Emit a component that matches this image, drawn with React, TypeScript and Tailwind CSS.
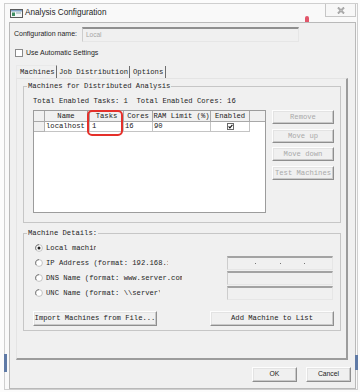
import React from "react";

const MONO = "font-['Liberation_Mono','DejaVu_Sans_Mono',monospace] text-[7.2px]";
const SANS = "font-['Liberation_Sans',Arial,sans-serif]";

type BtnProps = {
  children: React.ReactNode;
  className?: string;
  disabled?: boolean;
};

const Btn = ({ children, className = "", disabled }: BtnProps) => (
  <div
    className={`flex items-center justify-center bg-[#f0f0f0] border border-t-[#fdfdfd] border-l-[#fdfdfd] border-r-[#8e8e8e] border-b-[#8e8e8e] shadow-[inset_-1px_-1px_0_#c9c9c9,inset_1px_1px_0_#e3e3e3] whitespace-nowrap ${
      disabled ? "text-[#a9a9a9]" : "text-[#222]"
    } ${className}`}
  >
    {children}
  </div>
);

const Field = ({ children }: { children?: React.ReactNode }) => (
  <div className="ml-auto mr-[7px] w-[106px] h-[14px] bg-[#f0f0f0] border-t-2 border-t-[#a3a3a3] border-l border-l-[#cdcdcd] border-r border-r-[#e6e6e6] border-b border-b-[#e6e6e6] flex items-center">
    {children}
  </div>
);

const Radio = ({ checked }: { checked?: boolean }) => (
  <svg width="8" height="8" viewBox="0 0 8 8" className="shrink-0">
    <circle cx="4" cy="4" r="3.4" fill="#fff" stroke="#b5b5b5" strokeWidth="0.8" />
    <path d="M4 0.6 A3.4 3.4 0 0 0 1.2 6" fill="none" stroke="#707070" strokeWidth="0.9" />
    {checked && <circle cx="4" cy="4" r="1.5" fill="#222" />}
  </svg>
);

// labels are clipped by their fixed-width static controls, as in the dialog
const radios = [
  { label: "Local machine", w: "w-[50px]", checked: true, field: false },
  { label: "IP Address (format: 192.168.1.100)", w: "w-[122px]", field: true, ip: true },
  { label: "DNS Name (format: www.server.com)", w: "w-[136px]", field: true },
  { label: "UNC Name (format: \\\\server\\share)", w: "w-[114px]", field: true },
];

const MachinesTable = () => (
  <div className="w-[233px] h-[103px] bg-white border border-[#9c9c9c] flex flex-col text-[#222]">
    <div className="h-[11px] flex bg-[#f0f0f0] border-b border-[#a8a8a8] leading-[10px]">
      <div className="w-[11px] border-r border-[#a8a8a8]" />
      <div className="w-[45px] border-r-[3px] border-double border-[#a0a0a0] text-center">Name</div>
      <div className="w-[34px] border-r border-[#a8a8a8] text-center">Tasks</div>
      <div className="w-[29px] border-r border-[#a8a8a8] text-center">Cores</div>
      <div className="w-[58px] border-r border-[#a8a8a8] text-center">RAM Limit (%)</div>
      <div className="w-[39px] border-r border-[#a8a8a8] text-center">Enabled</div>
      <div className="flex-1" />
    </div>
    <div className="h-[10px] flex leading-[9px]">
      <div className="w-[11px] bg-[#f0f0f0] border-r border-b border-[#b4b4b4]" />
      <div className="w-[45px] pl-[1px] border-r border-b border-[#c4c4c4]">localhost</div>
      <div className="w-[34px] pl-[2px] border-r border-b border-[#c4c4c4]">1</div>
      <div className="w-[29px] pl-[1px] border-r border-b border-[#c4c4c4]">16</div>
      <div className="w-[58px] pl-[1px] border-r border-b border-[#c4c4c4]">90</div>
      <div className="w-[39px] border-r border-b border-[#c4c4c4] flex items-center justify-center">
        <svg width="7" height="7" viewBox="0 0 7 7">
          <rect x="0.5" y="0.5" width="6" height="6" fill="#fff" stroke="#6a6a6a" />
          <path d="M1.6 3.4 L2.9 4.8 L5.4 1.8" fill="none" stroke="#111" strokeWidth="1.1" />
        </svg>
      </div>
    </div>
  </div>
);

export default function App() {
  return (
    <div className={`relative w-[360px] h-[392px] bg-[#fcfcfc] overflow-hidden ${SANS}`}>
      <div className="ml-[4px] mt-[3px] w-[354px] h-[387px] border border-[#cfcfcf] bg-[#f9f9f9] flex flex-col">
        {/* title bar */}
        <div className="h-[18px] flex items-center shrink-0">
          <svg width="13" height="9" viewBox="0 0 13 9" className="ml-[5px] shrink-0">
            <rect x="0.5" y="0.5" width="12" height="8" fill="#f4f6f8" stroke="#5a5a5a" />
            <rect x="1" y="1" width="11" height="1.5" fill="#7fa0c4" />
            <rect x="2" y="3.5" width="3" height="3.5" fill="#3f8f63" />
            <rect x="6" y="3.5" width="5" height="1" fill="#8aa" />
          </svg>
          <span className="ml-[2px] text-[8.2px] text-[#1e1e1e] leading-none">Analysis Configuration</span>
          <div className="ml-auto mr-[1px] self-start w-[31px] h-[13px] border border-t-0 border-[#c6c6c6] bg-[#f7f7f7] flex items-center justify-center">
            <svg width="8" height="7" viewBox="0 0 8 7">
              <path d="M1 0.5 L7 6.5 M7 0.5 L1 6.5" stroke="#8c8c8c" strokeWidth="1.8" />
              <path d="M1 0.5 L7 6.5 M7 0.5 L1 6.5" stroke="#f2f2f2" strokeWidth="0.6" />
            </svg>
          </div>
        </div>

        {/* client area */}
        <div className="ml-[4px] w-[347px] flex-1 border border-[#b9b9b9] bg-[#f0f0f0] flex flex-col">
          <div className="mt-[4px] h-[15px] flex items-center">
            <span className="ml-[4px] w-[68px] text-[7px] text-[#1e1e1e]">Configuration name:</span>
            <div className="w-[217px] h-[15px] bg-[#f0f0f0] border-t-2 border-t-[#8f8f8f] border-l border-l-[#cdcdcd] border-r border-r-[#e6e6e6] border-b border-b-[#e6e6e6] flex items-center pl-[3px] text-[6.5px] text-[#a6a6a6]">
              Local
            </div>
          </div>

          <div className="mt-[7px] h-[8px] flex items-center">
            <div className="ml-[5px] w-[8px] h-[8px] border border-[#8a8a8a] bg-white" />
            <span className="ml-[3px] text-[7px] text-[#1e1e1e]">Use Automatic Settings</span>
          </div>

          {/* tabs */}
          <div className={`mt-[8px] ml-[6px] h-[13px] flex items-stretch text-[#1e1e1e] leading-[12px] ${MONO}`}>
            <div className="w-[41px] pl-[3px] border-l border-t border-[#e9e9e9] border-r border-r-[#6e6e6e]">Machines</div>
            <div className="w-[73px] pl-[2px] border-r border-[#6e6e6e] mt-[1px]">Job Distribution</div>
            <div className="w-[36px] pl-[3px] border-r border-[#6e6e6e] mt-[1px]">Options</div>
          </div>

          {/* tab panel */}
          <div className={`ml-[6px] w-[332px] h-[282px] border-l border-t border-l-[#e4e4e4] border-t-[#e4e4e4] border-r-2 border-b-2 border-r-[#9c9c9c] border-b-[#9c9c9c] flex flex-col text-[#1e1e1e] ${MONO}`}>
            <fieldset className="mt-[2px] ml-[6px] w-[318px] h-[142px] border border-[#c6c6c6]">
              <legend className="ml-[3px] px-[1px] leading-[10px]">Machines for Distributed Analysis</legend>
              <div className="pl-[9px]">
                <div className="mt-[5px] leading-[10px] whitespace-pre">Total Enabled Tasks: 1  Total Enabled Cores: 16</div>
                <div className="mt-[4px] flex">
                  <MachinesTable />
                  <div className="ml-[6px] w-[62px] flex flex-col">
                    <Btn disabled className="h-[14px]">Remove</Btn>
                    <Btn disabled className="h-[14px] mt-[5px]">Move up</Btn>
                    <Btn disabled className="h-[14px] mt-[4px]">Move down</Btn>
                    <Btn disabled className="h-[14px] mt-[5px]">Test Machines</Btn>
                  </div>
                </div>
              </div>
            </fieldset>

            <fieldset className="mt-[5px] ml-[6px] w-[318px] h-[103px] border border-[#c6c6c6]">
              <legend className="ml-[3px] px-[1px] leading-[10px]">Machine Details:</legend>
              <div className="mt-[2px]">
                {radios.map((r) => (
                  <div key={r.label} className="h-[15px] pl-[11px] flex items-center">
                    <Radio checked={r.checked} />
                    <div className={`ml-[3px] ${r.w} overflow-hidden whitespace-pre leading-[10px]`}>{r.label}</div>
                    {r.field && (
                      <Field>
                        {r.ip && (
                          <div className="w-full flex justify-between px-[27px] pt-[1px]">
                            <span className="w-[1px] h-[1px] bg-[#777]" />
                            <span className="w-[1px] h-[1px] bg-[#777]" />
                            <span className="w-[1px] h-[1px] bg-[#777]" />
                          </div>
                        )}
                      </Field>
                    )}
                  </div>
                ))}
                <div className="mt-[11px] pl-[9px] flex">
                  <Btn className="w-[124px] h-[15px]">Import Machines from File...</Btn>
                  <Btn className="ml-[53px] w-[124px] h-[15px]">Add Machine to List</Btn>
                </div>
              </div>
            </fieldset>
          </div>

          <div className="mt-[7px] pr-[4px] flex justify-end gap-[9px] text-[6.8px]">
            <Btn className="w-[45px] h-[15px]">OK</Btn>
            <Btn className="w-[45px] h-[15px]">Cancel</Btn>
          </div>
        </div>
      </div>

      {/* annotation and background bits */}
      <div className="absolute left-[87px] top-[110px] w-[36px] h-[26px] border-2 border-[#e5302a] rounded-[5px]" />
      <div className="absolute left-[305px] top-[16px] w-[4px] h-[6px] bg-[#e2566a] rounded-t-full blur-[0.6px]" />
      <div className="absolute left-[4px] top-[354px] w-[3px] h-[18px] bg-[#5f7aa6]" />
      <div className="absolute left-[355px] top-[355px] w-[3px] h-[15px] bg-[#5f7aa6]" />
    </div>
  );
}
